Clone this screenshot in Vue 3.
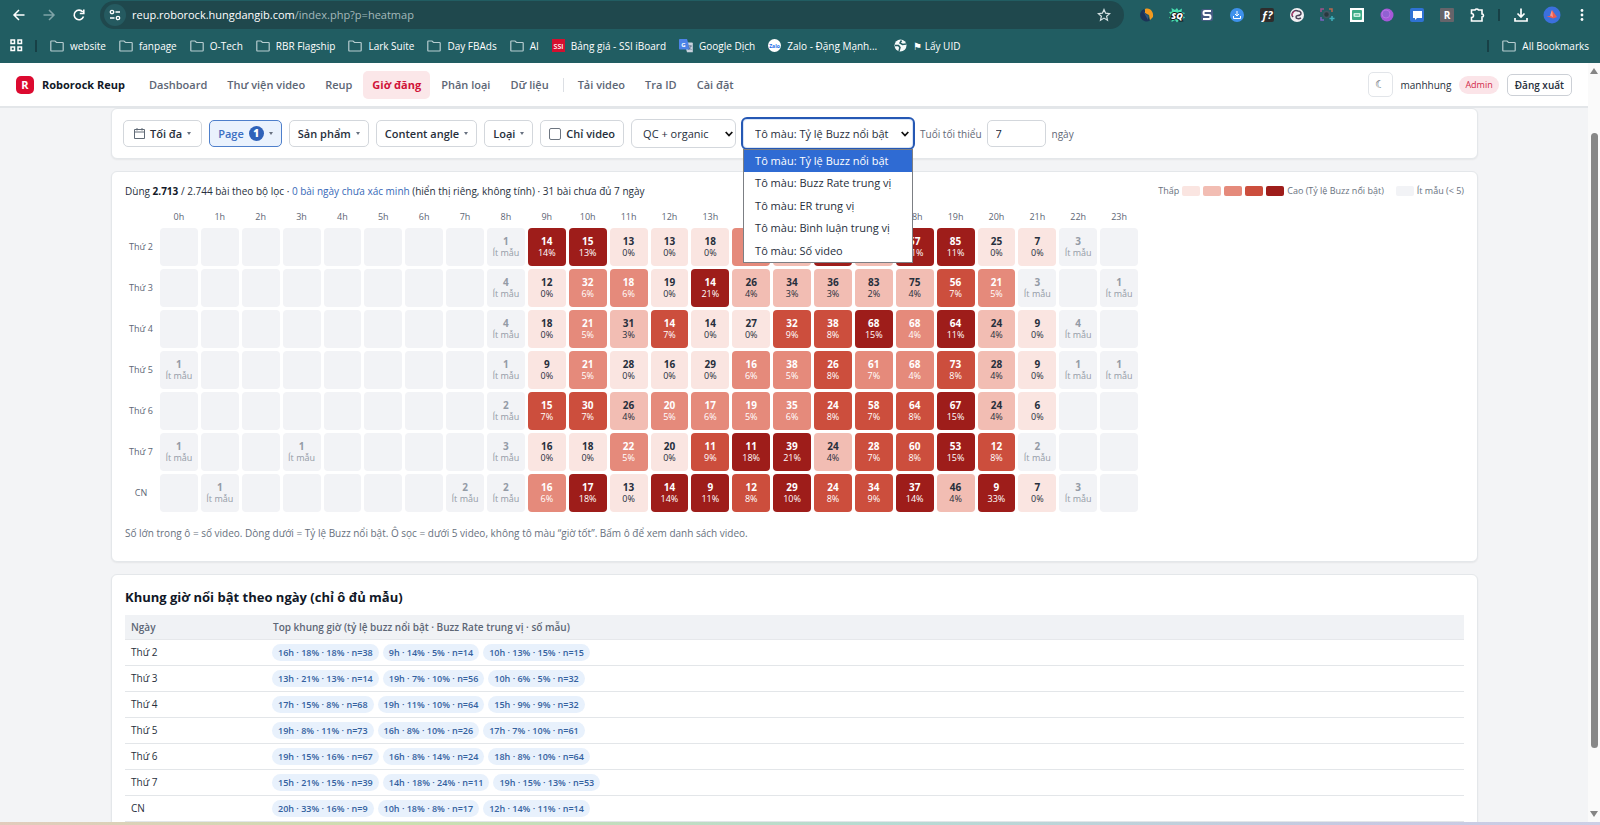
<script setup>
import { ref } from 'vue'

const bookmarks = ['website', 'fanpage', 'O-Tech', 'RBR Flagship', 'Lark Suite', 'Day FBAds', 'AI']
const nav = ['Dashboard', 'Thư viện video', 'Reup', 'Giờ đăng', 'Phân loại', 'Dữ liệu']
const tools = ['Tải video', 'Tra ID', 'Cài đặt']
const metrics = ['Tỷ lệ Buzz nổi bật', 'Buzz Rate trung vị', 'ER trung vị', 'Bình luận trung vị', 'Số video']
const metric = ref(metrics[0])
const source = ref('QC + organic')
const minAge = ref('7')
const videoOnly = ref(false)
const hours = Array.from({ length: 24 }, (_, i) => (i > 13 && i < 18 ? '' : i + 'h'))

// Each cell is "videos:percent[:level]", "-" is empty, a lone number is a small sample.
const raw = [
  ['Thứ 2', '- - - - - - - - 1 14:14 15:13 13:0 13:0 18:0 ::3 ::2 ::5 ::2 57:11 85:11 25:0 7:0 3 -'],
  ['Thứ 3', '- - - - - - - - 4 12:0 32:6 18:6 19:0 14:21 26:4 34:3 36:3 83:2 75:4 56:7 21:5 3 - 1'],
  ['Thứ 4', '- - - - - - - - 4 18:0 21:5 31:3 14:7 14:0 27:0 32:9 38:8 68:15 68:4:3 64:11 24:4 9:0 4 -'],
  ['Thứ 5', '1 - - - - - - - 1 9:0 21:5 28:0 16:0 29:0 16:6 38:5 26:8 61:7:3 68:4:3 73:8 28:4 9:0 1 1'],
  ['Thứ 6', '- - - - - - - - 2 15:7 30:7 26:4 20:5 17:6 19:5 35:6 24:8 58:7 64:8 67:15 24:4 6:0 - -'],
  ['Thứ 7', '1 - - 1 - - - - 3 16:0 18:0 22:5 20:0 11:9 11:18 39:21 24:4 28:7 60:8 53:15 12:8 2 - -'],
  ['CN', '- 1 - - - - - 2 2 16:6 17:18 13:0 14:14 9:11 12:8 29:10 24:8 34:9 37:14 46:4 9:33 7:0 3 -']
]
function level(p) {
  return p === 0 ? 1 : p < 5 ? 2 : p < 7 ? 3 : p < 10 ? 4 : 5
}
const rows = raw.map(([day, line]) => ({
  day,
  cells: line.split(' ').map((c) => {
    if (c === '-') return { n: '', sub: '', cls: 'few' }
    const [n, p, l] = c.split(':')
    return p === undefined
      ? { n, sub: 'Ít mẫu', cls: 'few' }
      : { n, sub: p && p + '%', cls: 'l' + (l || level(+p)) }
  })
}))
const best = [
  ['Thứ 2', '16h · 18% · 18% · n=38', '9h · 14% · 5% · n=14', '10h · 13% · 15% · n=15'],
  ['Thứ 3', '13h · 21% · 13% · n=14', '19h · 7% · 10% · n=56', '10h · 6% · 5% · n=32'],
  ['Thứ 4', '17h · 15% · 8% · n=68', '19h · 11% · 10% · n=64', '15h · 9% · 9% · n=32'],
  ['Thứ 5', '19h · 8% · 11% · n=73', '16h · 8% · 10% · n=26', '17h · 7% · 10% · n=61'],
  ['Thứ 6', '19h · 15% · 16% · n=67', '16h · 8% · 14% · n=24', '18h · 8% · 10% · n=64'],
  ['Thứ 7', '15h · 21% · 15% · n=39', '14h · 18% · 24% · n=11', '19h · 15% · 13% · n=53'],
  ['CN', '20h · 33% · 16% · n=9', '10h · 18% · 8% · n=17', '12h · 14% · 11% · n=14']
]
</script>

<template>
  <div class="window">
    <div class="chrome">
      <div class="toolbar">
        <button class="tool" aria-label="Back"><svg width="16" height="16" viewBox="0 0 16 16" fill="none" stroke="#fff" stroke-width="1.5"><path d="M13.500 8H3.500M8 3L3 8l5 5" /></svg></button>
        <button class="tool" aria-label="Forward"><svg width="16" height="16" viewBox="0 0 16 16" fill="none" stroke="#7fa4a8" stroke-width="1.500"><path d="M2.500 8h10M8 3l5 5-5 5" /></svg></button>
        <button class="tool" aria-label="Reload"><svg width="16" height="16" viewBox="0 0 16 16" fill="none" stroke="#fff" stroke-width="1.600"><path d="M12.500 9.500A4.800 4.800 0 1 1 11.800 5" /><path d="M12.800 2.500v4H8.800" /></svg></button>
        <div class="address">
          <span class="site"><svg width="14" height="14" viewBox="0 0 14 14" fill="none" stroke="#fff" stroke-width="1.300"><circle cx="4" cy="4" r="1.700" /><path d="M7.500 4h4.500M2 10h4.500" /><circle cx="10" cy="10" r="1.700" /></svg></span>
          <span class="url">reup.roborock.hungdangib.com<i>/index.php?p=heatmap</i></span>
          <svg class="star" width="14" height="14" viewBox="0 0 14 14" fill="none" stroke="#d5e2e3" stroke-width="1.200"><path d="M7 1.500l1.600 3.700 4 .4-3 2.600.9 4L7 10.100l-3.500 2.100.9-4-3-2.600 4-.4z" /></svg>
        </div>
        <div class="exts">
          <svg width="16" height="16" viewBox="0 0 16 16"><path d="M5 2a6.500 6.500 0 1 0 6 11.500L8 8z" fill="#1b3358" /><path d="M6 2c5-2 9 3 8 8l-3 3-1-5-4-2z" fill="#f39a1f" /><path d="M4 4l5 5v4" fill="#315681" /></svg>
          <svg width="16" height="16" viewBox="0 0 16 16"><path d="M8 1l1.500 2.500L13 1.500l-.5 3.500L16 6l-2 2 2 3-3 .5.500 3-3.500-1.500L8 15.500 6 13l-3.500 2 .5-3.500L0 11l2-3-2-3 3-.5L2.500 1 6 3z" fill="#47dfb0" /><text x="8" y="11.500" text-anchor="middle" font-size="9" font-weight="800" font-style="italic" fill="#fff" stroke="#111" stroke-width="2" paint-order="stroke">SQ</text></svg>
          <svg width="16" height="16" viewBox="0 0 16 16"><rect x="2" y="2" width="12" height="12" rx="2" fill="#465b82" /><path d="M12 4H6Q4.500 4 4.500 6T6 8h4q1.500 0 1.500 2T10 12H4" fill="none" stroke="#fff" stroke-width="2" /></svg>
          <svg width="16" height="16" viewBox="0 0 16 16"><circle cx="8" cy="8" r="7" fill="#3e91ec" /><path d="M8 4v5M6 7l2 2 2-2M4.500 9v2.500h7V9" fill="none" stroke="#fff" /></svg>
          <svg width="16" height="16" viewBox="0 0 16 16"><rect x="1" y="1" width="14" height="14" rx="2" fill="#2e2d2d" /><text x="8" y="12" text-anchor="middle" font-size="11" font-weight="700" font-style="italic" fill="#fff">ƒ?</text></svg>
          <svg width="16" height="16" viewBox="0 0 16 16"><circle cx="8" cy="8" r="7" fill="#f2f0f3" /><path d="M4 10a4 4 0 0 1 5-6c3 0 4 3 2 4s-4 0-4 2 3 2 5 1" fill="none" stroke="#4a4458" stroke-width="1.500" /><path d="M3 9a5 5 0 0 1 3-5" fill="none" stroke="#cc3b75" /></svg>
          <svg width="16" height="16" viewBox="0 0 16 16" fill="none" stroke-width="1.500"><path d="M2 5V2h3" stroke="#a0508a" /><path d="M10 2h3v3" stroke="#b8674e" /><path d="M2 10v3h3" stroke="#7a62c2" /><path d="M13 9v5M10.500 11.500h5" stroke="#3eafbb" /><circle cx="7.500" cy="7.500" r="3" fill="#29383f" stroke="#405762" /></svg>
          <svg width="16" height="16" viewBox="0 0 16 16"><path d="M1 1h14v14H1z" fill="#fff" /><rect x="3" y="3" width="10" height="10" rx="1" fill="#3baa85" /><rect x="4.500" y="6" width="7" height="4" rx="1" fill="#c9f0e0" /><path d="M7 7v2M9 7v2" stroke="#3baa85" /></svg>
          <svg width="16" height="16" viewBox="0 0 16 16"><circle cx="8" cy="8" r="6.500" fill="#a558d8" /><circle cx="7" cy="7" r="4" fill="#9161d2" stroke="#b573e2" /></svg>
          <svg width="16" height="16" viewBox="0 0 16 16"><rect x="1" y="1" width="14" height="14" rx="2" fill="#2f72d4" /><path d="M4 4h9v7H8l-2 2v-2H4z" fill="#fff" /></svg>
          <svg width="16" height="16" viewBox="0 0 16 16"><rect x="1" y="1" width="14" height="14" rx="1" fill="#66646a" /><text x="8" y="12" text-anchor="middle" font-size="10" font-weight="700" fill="#fff">R</text></svg>
          <svg width="16" height="16" viewBox="0 0 16 16" fill="none" stroke="#fff" stroke-width="1.600"><path d="M2.500 3H6a2 2 0 0 1 3.500 0H13v4a1.500 1.500 0 0 1 0 3v4H2.500v-3.500a2 2 0 0 0 0-4z" /></svg>
        </div>
        <span class="bar"></span>
        <button class="tool" aria-label="Downloads"><svg width="16" height="16" viewBox="0 0 16 16" fill="none" stroke="#fff" stroke-width="1.700"><path d="M8 1.500v8.500M4.500 6.500L8 10l3.500-3.500M2 11v3h12v-3" /></svg></button>
        <button class="tool profile" aria-label="Profile"><svg width="18" height="18" viewBox="0 0 18 18"><circle cx="9" cy="9" r="8.500" fill="#3b70dd" /><path d="M9 4l5 7-4 1.500L3.500 10H8z" fill="#ec5c50" /><path d="M9 4l1 7-3-1.500z" fill="#ff9588" /></svg></button>
        <button class="tool more" aria-label="Menu"><svg width="16" height="16" viewBox="0 0 16 16" fill="#fff"><circle cx="8" cy="3.500" r="1.400" /><circle cx="8" cy="8" r="1.400" /><circle cx="8" cy="12.500" r="1.400" /></svg></button>
      </div>
      <div class="marks">
        <svg class="apps" width="13" height="13" viewBox="0 0 13 13" fill="none" stroke="#fff" stroke-width="1.500"><path d="M1 1h3.500v3.500H1zM8 1h3.500v3.500H8zM1 8h3.500v3.500H1zM8 8h3.500v3.500H8z" /></svg>
        <span class="bar"></span>
        <a v-for="b in bookmarks" :key="b" href="#"><svg width="14" height="12" viewBox="0 0 14 12" fill="none" stroke="#b7cdd0" stroke-width="1.200"><path d="M.8 1.500Q.8 1 1.300 1H5l1.500 1.500h6q.7 0 .7.700v7q0 .8-.7.800h-11q-.7 0-.7-.8z" /></svg>{{ b }}</a>
        <a href="#"><svg width="13" height="13" viewBox="0 0 13 13"><path d="M0 0h13v13H0z" fill="#d40f2f" /><text x="6.500" y="9.500" text-anchor="middle" font-size="7" font-weight="600" fill="#fff">SSI</text></svg>Bảng giá - SSI iBoard</a>
        <a href="#"><svg width="14" height="14" viewBox="0 0 14 14"><path d="M5 3.500h8q.8 0 .8.800v9H8z" fill="#c9d2dd" /><path d="M.8 0H8l3 10.500H.800Q0 10.500 0 9.700V.8Q0 0 .8 0z" fill="#4c83e8" /><text x="4.500" y="7.500" text-anchor="middle" font-size="6" font-weight="700" fill="#fff">G</text><path d="M9 7h4M11 6v1M9.500 11L12 7M10 8.500l2.500 2.500" fill="none" stroke="#5d718d" stroke-width=".8" /></svg>Google Dịch</a>
        <a href="#"><svg width="13" height="13" viewBox="0 0 13 13"><circle cx="6.500" cy="6.500" r="6.500" fill="#fff" /><text x="6.500" y="8.500" text-anchor="middle" font-size="5" font-weight="700" fill="#1d6ce8">Zalo</text></svg>Zalo - Đặng Mạnh...</a>
        <a href="#" class="uid"><svg width="13" height="13" viewBox="0 0 13 13"><circle cx="6.500" cy="6.500" r="6" fill="#f5fafa" /><path d="M7.500 1.500L6 4l2.500 1.500L12 5M1 6.500h3.500L6 8.500 5 12" fill="none" stroke="#225c61" stroke-width="1.500" /></svg><span>⚑ Lấy UID</span></a>
        <span class="bar last"></span>
        <a href="#" class="all"><svg width="14" height="12" viewBox="0 0 14 12" fill="none" stroke="#b7cdd0" stroke-width="1.200"><path d="M.8 1.500Q.8 1 1.300 1H5l1.500 1.500h6q.7 0 .7.700v7q0 .8-.7.800h-11q-.7 0-.7-.8z" /></svg>All Bookmarks</a>
      </div>
    </div>

    <div class="viewport">
      <div class="app">
        <header>
          <span class="logo">R</span><strong>Roborock Reup</strong>
          <nav>
            <a v-for="n in nav" :key="n" href="#" :class="{ on: n === 'Giờ đăng' }">{{ n }}</a>
            <span class="sep"></span>
            <a v-for="n in tools" :key="n" href="#">{{ n }}</a>
          </nav>
          <button class="theme" aria-label="Giao diện tối">☾</button>
          <span class="user">manhhung</span>
          <span class="role">Admin</span>
          <button class="logout">Đăng xuất</button>
        </header>

        <main>
          <form class="card filters" @submit.prevent>
            <button class="btn date"><svg width="11" height="11" viewBox="0 0 11 11" fill="none" stroke="#606a76"><path d="M.5 1.500h10v9H.5zM.5 4h10M3 0v2.500M8 0v2.500" /></svg>Tối đa<i></i></button>
            <button class="btn active">Page<b>1</b><i></i></button>
            <button class="btn">Sản phẩm<i></i></button>
            <button class="btn">Content angle<i></i></button>
            <button class="btn">Loại<i></i></button>
            <label class="btn check"><input v-model="videoOnly" type="checkbox" />Chỉ video</label>
            <div class="pick">
              <select v-model="source" aria-label="Nguồn"><option>QC + organic</option></select>
              <svg width="8" height="6" viewBox="0 0 8 6" fill="none" stroke="#111" stroke-width="1.800"><path d="M.7 1L4 4.500 7.300 1" /></svg>
            </div>
            <div class="pick focus">
              <select v-model="metric" aria-label="Tô màu"><option v-for="m in metrics" :key="m" :value="m">Tô màu: {{ m }}</option></select>
              <svg width="8" height="6" viewBox="0 0 8 6" fill="none" stroke="#111" stroke-width="1.800"><path d="M.7 1L4 4.500 7.300 1" /></svg>
              <ul class="menu" role="listbox">
                <li v-for="m in metrics" :key="m" role="option" :aria-selected="m === metric" :class="{ sel: m === metric }" @click="metric = m">Tô màu: {{ m }}</li>
              </ul>
            </div>
            <label class="age" for="age">Tuổi tối thiểu</label>
            <input id="age" v-model="minAge" class="num" type="text" />
            <span class="age unit">ngày</span>
          </form>

          <section class="card heat">
            <div class="info">
              <p>Dùng <b>2.713</b> / 2.744 bài theo bộ lọc · <a href="#">0 bài ngày chưa xác minh</a> (hiển thị riêng, không tính) · 31 bài chưa đủ 7 ngày</p>
              <div class="legend">
                <span>Thấp</span>
                <i v-for="l in 5" :key="l" :class="'l' + l"></i>
                <span>Cao (Tỷ lệ Buzz nổi bật)</span>
                <i class="few gap"></i><span>Ít mẫu (&lt; 5)</span>
              </div>
            </div>
            <div class="grid">
              <span></span>
              <span v-for="(h, i) in hours" :key="i" class="hour">{{ h }}</span>
              <template v-for="r in rows" :key="r.day">
                <span class="day">{{ r.day }}</span>
                <button v-for="(c, i) in r.cells" :key="i" class="cell" :class="c.cls" :aria-label="r.day + ' ' + i + 'h'"><b>{{ c.n }}</b><small>{{ c.sub }}</small></button>
              </template>
            </div>
            <p class="note">Số lớn trong ô = số video. Dòng dưới = Tỷ lệ Buzz nổi bật. Ô sọc = dưới 5 video, không tô màu “giờ tốt”. Bấm ô để xem danh sách video.</p>
          </section>

          <section class="card best">
            <h2>Khung giờ nổi bật theo ngày (chỉ ô đủ mẫu)</h2>
            <table>
              <thead><tr><th>Ngày</th><th>Top khung giờ (tỷ lệ buzz nổi bật · Buzz Rate trung vị · số mẫu)</th></tr></thead>
              <tbody>
                <tr v-for="b in best" :key="b[0]">
                  <td>{{ b[0] }}</td>
                  <td><div class="chips"><span v-for="c in b.slice(1)" :key="c">{{ c }}</span></div></td>
                </tr>
              </tbody>
            </table>
          </section>
        </main>
      </div>
      <div class="scroll"><i class="up"></i><div class="track"><div class="thumb"></div></div><i class="down"></i></div>
    </div>
    <div class="strip"></div>
  </div>
</template>

<style>
body { overflow: hidden; }
</style>

<style scoped>
* { box-sizing: border-box; }
.window { height: 100vh; display: flex; flex-direction: column; font-family: "Open Sans", "Noto Sans", sans-serif; font-size: 11px; line-height: 16px; color: #272f3c; background: #f3f4f6; }
button, input, select { font: inherit; color: inherit; margin: 0; }
button { padding: 0; border: 0; background: none; }
a { color: inherit; text-decoration: none; }
p, h2, ul { margin: 0; padding: 0; }
i { font-style: normal; }
svg { flex: none; }

.chrome { flex: none; height: 63px; background: #215d62; color: #fff; }
.toolbar { height: 30px; display: flex; align-items: center; padding: 0 10px 0 11px; }
.tool { width: 16px; height: 18px; display: flex; align-items: center; justify-content: center; margin-right: 14px; }
.address { flex: 1; height: 28px; border-radius: 14px; background: #1f484d; display: flex; align-items: center; padding: 0 13px 0 4px; margin: 0 15px 0 -3px; }
.toolbar .tool:nth-child(3) { margin-right: 16px; }
.site { width: 22px; height: 22px; border-radius: 50%; background: #255a60; display: flex; align-items: center; justify-content: center; margin-right: 6px; }
.url { flex: 1; font-size: 11px; }
.url i { color: #a4b9bb; }
.exts { display: flex; gap: 14px; }
.exts svg { display: block; }
.bar { width: 2px; height: 12px; background: #174046; }
.toolbar > .bar { margin: 0 13px; }
.profile { width: 18px; margin-right: 13px; }
.more { margin-right: 0; }
.marks { height: 33px; display: flex; align-items: center; padding: 0 11px 2px 10px; font-size: 10px; font-weight: 500; }
.marks .bar { margin: 0 13px 0 12px; }
.marks a { display: flex; align-items: center; gap: 6px; margin-right: 13px; white-space: nowrap; }
.marks a.uid { margin-left: 4px; }
.marks .bar.last { margin: 0 13px 0 auto; }
.marks a.all { margin-right: 0; }

.viewport { flex: 1; min-height: 0; display: flex; }
.app { flex: 1; min-width: 0; overflow: hidden; display: flex; flex-direction: column; }
header { flex: none; height: 45px; background: #fff; border-bottom: 2px solid #e3e6e9; display: flex; align-items: center; padding: 0 16px; }
.logo { width: 18px; height: 18px; border-radius: 5px; background: #dc0a30; color: #fff; font-weight: 700; text-align: center; line-height: 18px; margin-right: 8px; }
header strong { font-size: 11px; color: #111827; margin-right: 15px; }
nav { display: flex; align-items: center; flex: 1; gap: 2px; }
nav a { padding: 6px 9px; border-radius: 5px; color: #5d6675; font-weight: 600; font-size: 11px; }
nav a.on { background: #fbe7e9; color: #d01238; font-weight: 700; }
.sep { width: 1px; height: 14px; background: #dcdfe4; margin: 0 3px; }
.theme { width: 25px; height: 25px; border: 1px solid #e2e5e9; border-radius: 5px; color: #4b5563; font-family: "DejaVu Sans", sans-serif; }
.user { margin: 0 8px; font-size: 10px; }
.role { padding: 1px 6px; border-radius: 9px; background: #fbe4e8; color: #d12a48; font-size: 9px; margin-right: 8px; }
.logout { height: 22px; padding: 0 7px; border: 1px solid #ccd0d6; border-radius: 5px; font-weight: 600; font-size: 10px; }

main { padding: 0 110px 0 111px; display: flex; flex-direction: column; gap: 12px; }
.card { flex: none; background: #fff; border: 1px solid #e4e7ea; border-radius: 6px; box-shadow: 0 1px 2px #0000000f; }
.filters { height: 51px; padding: 0 11px; display: flex; align-items: center; gap: 7px; }
.btn { height: 27px; padding: 0 8px; border: 1px solid #d3d7dc; border-radius: 5px; background: #fff; display: flex; align-items: center; gap: 5px; font-weight: 600; font-size: 11px; white-space: nowrap; }
.btn.date { padding: 0 10px; }
.btn i { border: 2px solid transparent; border-top: 3px solid #687180; border-bottom: 0; }
.btn.active { border-color: #4e7fcb; background: #eaf2fd; color: #3a6ec2; }
.btn b { width: 15px; height: 15px; border-radius: 50%; background: #2f62b9; color: #fff; font-size: 10px; line-height: 15px; }
.check input { appearance: none; width: 12px; height: 12px; border: 1px solid #6d7580; border-radius: 2px; }
.pick { position: relative; display: flex; align-items: center; }
.pick svg { position: absolute; right: 3px; pointer-events: none; }
.pick select { appearance: none; width: 105px; height: 29px; padding: 0 11px; border: 1px solid #d3d7dc; border-radius: 6px; background: #fff; font-size: 11px; outline: 0; }
.pick.focus select { width: 174px; height: 33px; border: 2px solid #2558b4; padding: 0 12px; box-shadow: inset 0 0 0 1px #d8e5f8; }
.pick.focus svg { right: 6px; }
.pick.focus { margin: 0 -2px; }
.menu { position: absolute; z-index: 5; top: 32px; left: 2px; right: 2px; height: 114px; display: grid; grid-auto-rows: 1fr; border: 1px solid #7c7f84; background: #fff; list-style: none; }
.menu li { line-height: 22px; padding-left: 11px; white-space: nowrap; }
.menu li.sel { background: #2f6bd3; color: #fff; }
.age { color: #5f6876; font-size: 10px; font-weight: 500; white-space: nowrap; }
.num { width: 59px; height: 27px; padding: 0 8px; border: 1px solid #d3d7dc; border-radius: 5px; background: #fff; color: #1d2635; margin-left: -2px; }
.unit { margin-left: -1px; }

.heat { padding: 11px 13px 20px; }
.info { display: flex; justify-content: space-between; align-items: center; font-size: 10px; }
.info a { color: #3769b8; }
.info b { color: #111827; }
.legend { display: flex; align-items: center; gap: 3px; color: #68717e; font-size: 9px; white-space: nowrap; }
.legend i { width: 18px; height: 10px; border-radius: 2px; }
.legend i.gap { margin-left: 9px; }
.grid { width: 1013px; display: grid; grid-template-columns: 32px repeat(24, minmax(0, 1fr)); gap: 3px; grid-template-rows: 24px repeat(7, 38px); margin-top: 2px; align-items: center; text-align: center; }
.hour, .day { font-size: 9px; color: #5d6675; white-space: nowrap; }
.hour { padding-top: 8px; }
.day { font-weight: 500; }
.cell { height: 38px; border-radius: 4px; display: flex; flex-direction: column; align-items: center; justify-content: center; overflow: hidden; }
.cell b { font-size: 10px; line-height: 11px; }
.cell small { font-size: 9px; line-height: 11px; white-space: nowrap; }
.few { background: #f2f3f6; color: #949ba6; }
.l1 { background: #fae5e1; }
.l2 { background: #f2bdb3; }
.l3 { background: #e58a7b; color: #fff; }
.l4 { background: #cc4e3d; color: #fff; }
.l5 { background: #9e1d1a; color: #fff; }
.note { margin-top: 13px; font-size: 10px; color: #68717e; }

.best { padding: 13px 13px 20px; }
h2 { font-size: 13px; line-height: 18px; color: #111827; margin-bottom: 9px; }
table { width: 100%; border-collapse: collapse; table-layout: fixed; }
th { height: 24px; text-align: left; background: #f0f2f5; color: #5d6675; font-size: 10px; font-weight: 600; padding: 0 6px; border-bottom: 1px solid #e6e8eb; }
th:first-child { width: 142px; }
td { height: 26px; padding: 0 6px; border-bottom: 1px solid #e3e6e9; font-size: 10px; }
td:last-child { padding-left: 5px; }
.chips { display: flex; gap: 4px; }
.chips span { height: 17px; line-height: 17px; padding: 0 6px; border-radius: 9px; background: #e8f1fc; color: #34619f; font-weight: 600; font-size: 9px; }

.scroll { width: 12px; background: #fafafa; display: flex; flex-direction: column; align-items: center; padding: 5px 0; }
.up, .down { border: 4px solid transparent; }
.up { border-bottom: 6px solid #858585; border-top: 0; }
.down { border-top: 6px solid #858585; border-bottom: 0; }
.track { flex: 1; width: 7px; padding: 59px 0 63px; }
.thumb { height: 100%; border-radius: 4px; background: #878787; }
.strip { flex: none; height: 3px; background: linear-gradient(90deg, #e2cbbc, #cbdfae 25%, #b6dbd2 55%, #c6c9e2 85%, #cdcfe6); }
</style>
